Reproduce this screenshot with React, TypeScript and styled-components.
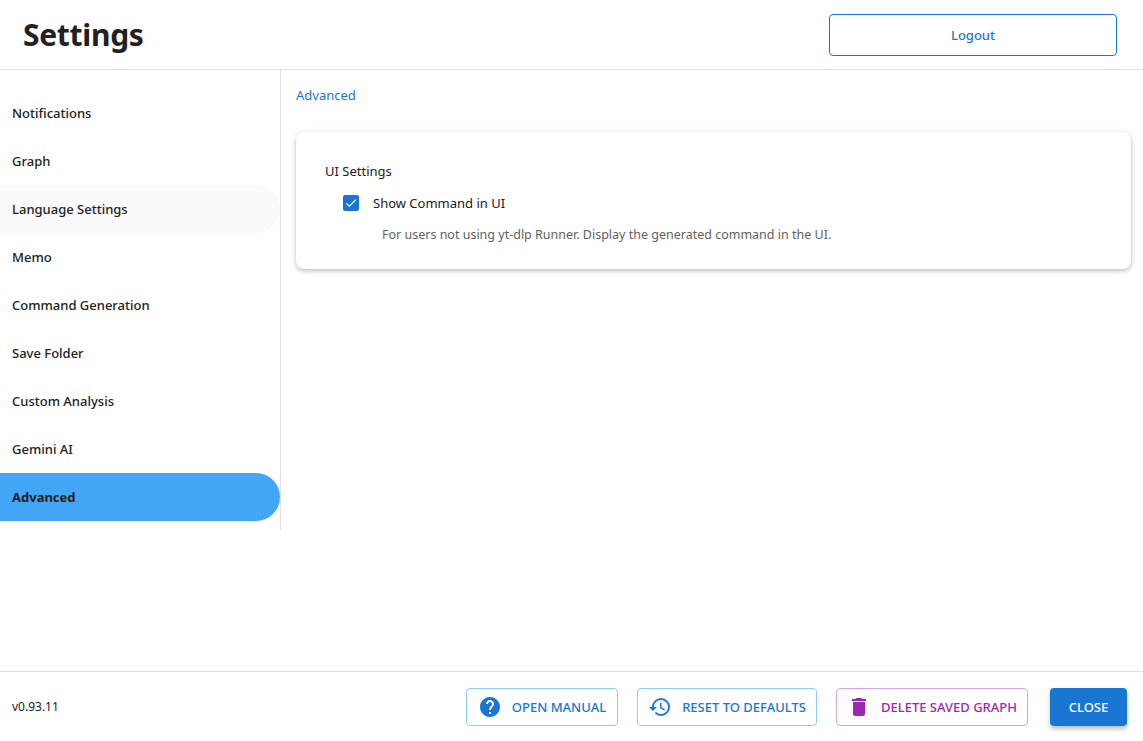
import React from "react";
import styled, { createGlobalStyle } from "styled-components";
import { MdHelp, MdHistory, MdDelete, MdCheck } from "react-icons/md";

const Global = createGlobalStyle`
  html, body { margin: 0; padding: 0; background: #fff; }
  body { font-family: "Noto Sans", "Open Sans", sans-serif; color: #212121; }
  * { box-sizing: border-box; }
`;

const Page = styled.div`
  height: 741px; display: flex; flex-direction: column;
`;
const Header = styled.header`
  height: 70px; display: flex; align-items: center; justify-content: space-between;
  padding: 0 26px 0 23px; border-bottom: 1px solid #e0e0e0; flex-shrink: 0;
`;
const Title = styled.h1`
  margin: 0; font-size: 30px; font-weight: 700; letter-spacing: -0.3px;
`;
const LogoutBtn = styled.button`
  width: 288px; height: 42px; margin-top: 0px; border: 1px solid #1976d2; border-radius: 4px;
  background: #fff; color: #1976d2; font: 500 13px "Noto Sans", sans-serif;
`;
const Body = styled.div`
  flex: 1; display: flex; align-items: flex-start;
`;
const Sidebar = styled.nav`
  width: 281px; border-right: 1px solid #e0e0e0; padding: 19px 0 9px;
  display: flex; flex-direction: column;
`;
const NavItem = styled.div<{ $active?: boolean; $hover?: boolean }>`
  height: 48px; display: flex; align-items: center; padding-left: 12px;
  font-size: 13px; font-weight: 500; color: #212121;
  border-radius: 0 24px 24px 0;
  background: ${p => (p.$active ? "#42a5f5" : p.$hover ? "#fafafa" : "transparent")};
  font-weight: ${p => (p.$active ? 700 : 500)};
`;
const Main = styled.main`
  flex: 1; padding: 16px 12px 0 15px;
`;
const Crumb = styled.div`
  font-size: 13px; color: #1976d2; margin-bottom: 28px;
`;
const Card = styled.section`
  border-radius: 8px; background: #fff; padding: 30px 29px 26px;
  box-shadow: 0 2px 4px rgba(0,0,0,0.2), 0 1px 8px rgba(0,0,0,0.08);
`;
const CardTitle = styled.div`font-size: 13px; margin-bottom: 14px;`;
const CheckRow = styled.div`
  display: flex; align-items: center; gap: 14px; padding-left: 18px; font-size: 13px;
`;
const Box = styled.span`
  width: 16px; height: 16px; border-radius: 2px; background: #1976d2; color: #fff;
  display: inline-flex; align-items: center; justify-content: center;
`;
const Help = styled.div`
  font-size: 12.5px; color: #616161; margin: 14px 0 0 57px;
`;
const Footer = styled.footer`
  height: 70px; border-top: 1px solid #e0e0e0; display: flex; align-items: center;
  padding: 0 16px 0 12px; gap: 19px; flex-shrink: 0;
`;
const Version = styled.div`font-size: 12px; flex: 1;`;
const Btn = styled.button<{ $c: string; $b: string; $w: number }>`
  width: ${p => p.$w}px; height: 38px; border: 1px solid ${p => p.$b}; border-radius: 4px;
  background: #fff; color: ${p => p.$c}; display: flex; align-items: center; justify-content: center;
  gap: 10px; font: 500 13px "Noto Sans", sans-serif; text-transform: uppercase;
`;
const CloseBtn = styled.button`
  width: 77px; height: 38px; border: none; border-radius: 4px; background: #1976d2; color: #fff;
  font: 500 13px "Noto Sans", sans-serif; margin-left: 3px;
  box-shadow: 0 3px 4px rgba(0,0,0,0.25);
`;

const items = ["Notifications","Graph","Language Settings","Memo","Command Generation","Save Folder","Custom Analysis","Gemini AI","Advanced"];

export default function App() {
  return (
    <Page>
      <Global />
      <Header>
        <Title>Settings</Title>
        <LogoutBtn>Logout</LogoutBtn>
      </Header>
      <Body>
        <Sidebar>
          {items.map(i => (
            <NavItem key={i} $active={i === "Advanced"} $hover={i === "Language Settings"}>{i}</NavItem>
          ))}
        </Sidebar>
        <Main>
          <Crumb>Advanced</Crumb>
          <Card>
            <CardTitle>UI Settings</CardTitle>
            <CheckRow><Box><MdCheck size={14} /></Box>Show Command in UI</CheckRow>
            <Help>For users not using yt-dlp Runner. Display the generated command in the UI.</Help>
          </Card>
        </Main>
      </Body>
      <Footer>
        <Version>v0.93.11</Version>
        <Btn $c="#1976d2" $b="#90caf9" $w={152}><MdHelp size={24} />Open Manual</Btn>
        <Btn $c="#1976d2" $b="#90caf9" $w={180}><MdHistory size={24} />Reset to Defaults</Btn>
        <Btn $c="#9c27b0" $b="#dda0e6" $w={192}><MdDelete size={24} />Delete Saved Graph</Btn>
        <CloseBtn>CLOSE</CloseBtn>
      </Footer>
    </Page>
  );
}
